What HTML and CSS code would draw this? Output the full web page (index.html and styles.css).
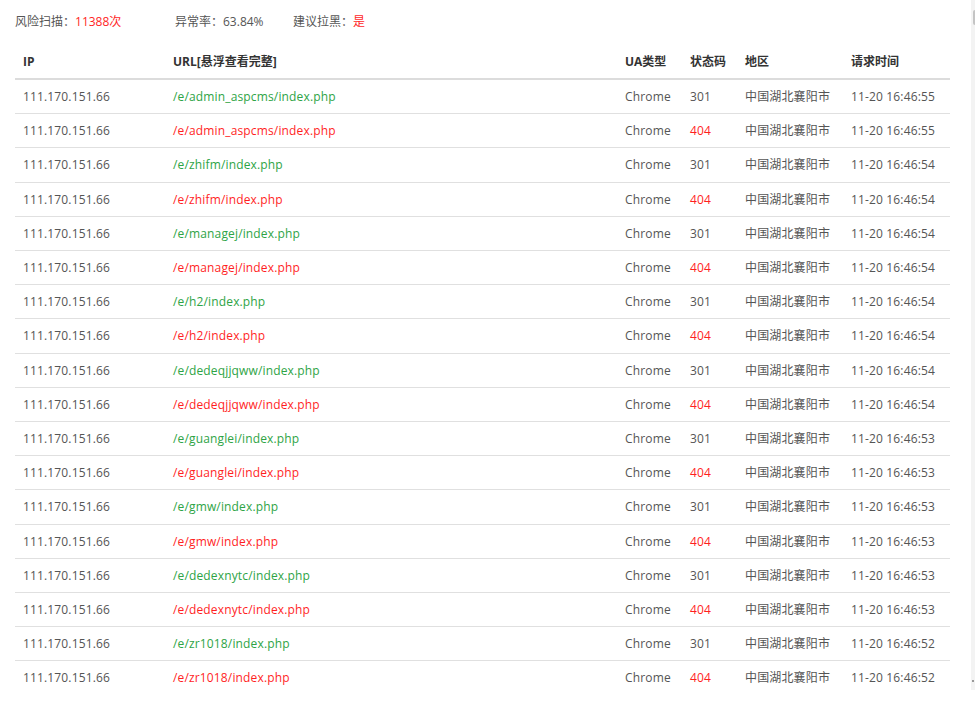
FILE: index.html
```html
<!DOCTYPE html>
<html lang="zh-CN">
<head>
<meta charset="utf-8">
<title>风险扫描</title>
<link rel="stylesheet" href="styles.css">
</head>
<body>
<div class="page">
  <div class="stats">
    <span class="stat w1">风险扫描：<em class="red">11388次</em></span>
    <span class="stat w2">异常率：63.84%</span>
    <span class="stat">建议拉黑：<em class="red">是</em></span>
  </div>
  <table class="log">
    <colgroup>
      <col class="c-ip"><col class="c-url"><col class="c-ua"><col class="c-code"><col class="c-area"><col class="c-time">
    </colgroup>
    <thead>
      <tr><th>IP</th><th>URL[悬浮查看完整]</th><th>UA类型</th><th>状态码</th><th>地区</th><th>请求时间</th></tr>
    </thead>
    <tbody>
      <tr><td>111.170.151.66</td><td class="green">/e/admin_aspcms/index.php</td><td>Chrome</td><td>301</td><td>中国湖北襄阳市</td><td>11-20 16:46:55</td></tr>
      <tr><td>111.170.151.66</td><td class="red">/e/admin_aspcms/index.php</td><td>Chrome</td><td class="red">404</td><td>中国湖北襄阳市</td><td>11-20 16:46:55</td></tr>
      <tr><td>111.170.151.66</td><td class="green">/e/zhifm/index.php</td><td>Chrome</td><td>301</td><td>中国湖北襄阳市</td><td>11-20 16:46:54</td></tr>
      <tr><td>111.170.151.66</td><td class="red">/e/zhifm/index.php</td><td>Chrome</td><td class="red">404</td><td>中国湖北襄阳市</td><td>11-20 16:46:54</td></tr>
      <tr><td>111.170.151.66</td><td class="green">/e/managej/index.php</td><td>Chrome</td><td>301</td><td>中国湖北襄阳市</td><td>11-20 16:46:54</td></tr>
      <tr><td>111.170.151.66</td><td class="red">/e/managej/index.php</td><td>Chrome</td><td class="red">404</td><td>中国湖北襄阳市</td><td>11-20 16:46:54</td></tr>
      <tr><td>111.170.151.66</td><td class="green">/e/h2/index.php</td><td>Chrome</td><td>301</td><td>中国湖北襄阳市</td><td>11-20 16:46:54</td></tr>
      <tr><td>111.170.151.66</td><td class="red">/e/h2/index.php</td><td>Chrome</td><td class="red">404</td><td>中国湖北襄阳市</td><td>11-20 16:46:54</td></tr>
      <tr><td>111.170.151.66</td><td class="green">/e/dedeqjjqww/index.php</td><td>Chrome</td><td>301</td><td>中国湖北襄阳市</td><td>11-20 16:46:54</td></tr>
      <tr><td>111.170.151.66</td><td class="red">/e/dedeqjjqww/index.php</td><td>Chrome</td><td class="red">404</td><td>中国湖北襄阳市</td><td>11-20 16:46:54</td></tr>
      <tr><td>111.170.151.66</td><td class="green">/e/guanglei/index.php</td><td>Chrome</td><td>301</td><td>中国湖北襄阳市</td><td>11-20 16:46:53</td></tr>
      <tr><td>111.170.151.66</td><td class="red">/e/guanglei/index.php</td><td>Chrome</td><td class="red">404</td><td>中国湖北襄阳市</td><td>11-20 16:46:53</td></tr>
      <tr><td>111.170.151.66</td><td class="green">/e/gmw/index.php</td><td>Chrome</td><td>301</td><td>中国湖北襄阳市</td><td>11-20 16:46:53</td></tr>
      <tr><td>111.170.151.66</td><td class="red">/e/gmw/index.php</td><td>Chrome</td><td class="red">404</td><td>中国湖北襄阳市</td><td>11-20 16:46:53</td></tr>
      <tr><td>111.170.151.66</td><td class="green">/e/dedexnytc/index.php</td><td>Chrome</td><td>301</td><td>中国湖北襄阳市</td><td>11-20 16:46:53</td></tr>
      <tr><td>111.170.151.66</td><td class="red">/e/dedexnytc/index.php</td><td>Chrome</td><td class="red">404</td><td>中国湖北襄阳市</td><td>11-20 16:46:53</td></tr>
      <tr><td>111.170.151.66</td><td class="green">/e/zr1018/index.php</td><td>Chrome</td><td>301</td><td>中国湖北襄阳市</td><td>11-20 16:46:52</td></tr>
      <tr class="last"><td>111.170.151.66</td><td class="red">/e/zr1018/index.php</td><td>Chrome</td><td class="red">404</td><td>中国湖北襄阳市</td><td>11-20 16:46:52</td></tr>
    </tbody>
  </table>
</div>
<div class="scrollbar"><div class="thumb"></div><div class="arrow"></div></div>
</body>
</html>
```

FILE: styles.css
```css
html, body {
  margin: 0;
  padding: 0;
  background: #fff;
}
body {
  font-family: "Open Sans", "Noto Sans CJK SC", sans-serif;
  font-size: 12px;
  color: #555;
  overflow: hidden;
}
.page {
  padding: 12px 0 0 15px;
}
.stats {
  display: flex;
  height: 20px;
  line-height: 20px;
  font-size: 12px;
  color: #555;
}
.stat.w1 { width: 160px; }
.stat.w2 { width: 118px; }
em { font-style: normal; }
.red { color: #ff1f1f; }
.green { color: #2ea446; }

.log {
  margin-top: 12px;
  width: 935px;
  table-layout: fixed;
  border-collapse: collapse;
}
.c-ip { width: 150px; }
.c-url { width: 452px; }
.c-ua { width: 65px; }
.c-code { width: 55px; }
.c-area { width: 106px; }
.c-time { width: 107px; }

.log th {
  text-align: left;
  font-weight: bold;
  color: #333;
  padding: 8px 8px 6px;
  line-height: 20px;
  height: 20px;
  border-bottom: 2px solid #dcdcdc;
  font-family: "Open Sans", "Noto Sans CJK SC", sans-serif;
  font-size: 12px;
}
.log td {
  padding: 7px 8px;
  line-height: 19.2px;
  letter-spacing: 0.15px;
  border-bottom: 1px solid #e0e0e0;
  white-space: nowrap;
  overflow: hidden;
}
.log tr.last td { border-bottom: none; }

.scrollbar {
  position: fixed;
  top: 0;
  right: 0;
  width: 4px;
  height: 690px;
  background: #f3f3f3;
}
.thumb {
  position: absolute;
  top: 10px;
  right: 0;
  width: 2px;
  height: 15px;
  background: #c4c4c4;
  border-radius: 2px 0 0 2px;
}
.arrow {
  position: absolute;
  top: 680px;
  right: 1px;
  width: 2px;
  height: 2px;
  background: #999;
}
```
